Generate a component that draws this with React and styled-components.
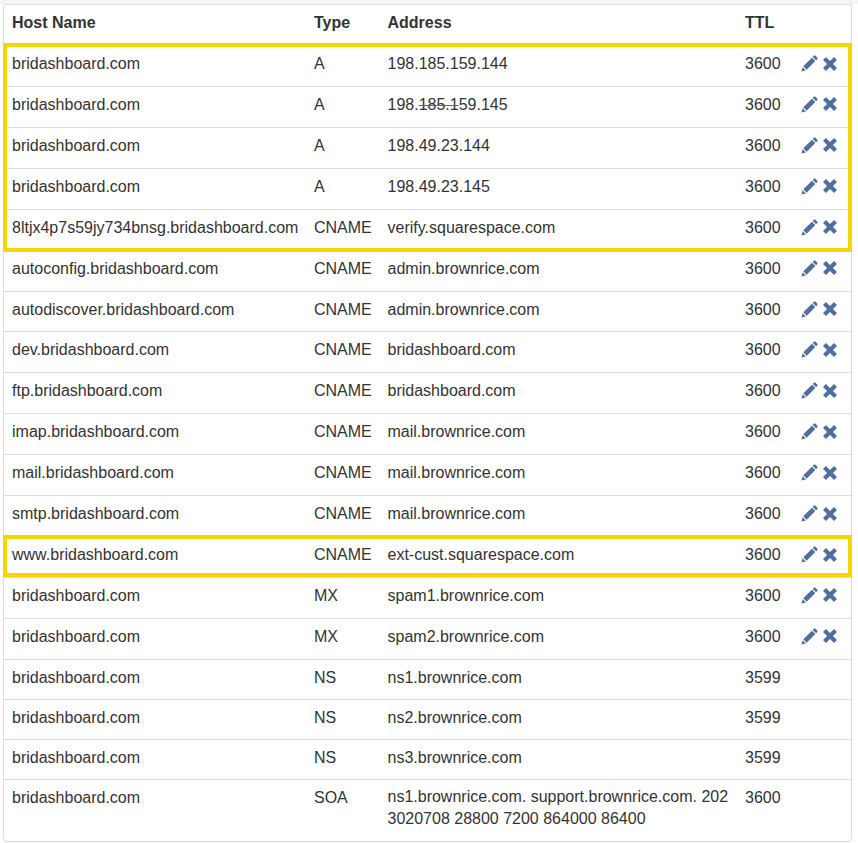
import styled, { createGlobalStyle } from "styled-components";

const GlobalStyle = createGlobalStyle`
  html, body {
    margin: 0;
    background: #fff;
    font-family: "Liberation Sans", Arial, sans-serif;
    font-size: 16px;
    color: #333;
  }
`;

const Page = styled.div`
  width: 858px;
  height: 843px;
  overflow: hidden;
  position: relative;
  background: #fff;
`;

const TopStrip = styled.div`
  height: 4px;
  background: #f5f5f5;
`;

const Panel = styled.div`
  margin: 0 6px 0 3px;
  border: 1px solid #ddd;
  border-radius: 0 0 4px 4px;
  box-shadow: 0 1px 1px rgba(0, 0, 0, 0.05);
`;

const Table = styled.table`
  width: 100%;
  table-layout: fixed;
  border-collapse: collapse;
  line-height: 23px;
`;

const Th = styled.th`
  padding: 6px 8px 11px;
  text-align: left;
  font-weight: 700;
`;

const Td = styled.td`
  padding: 6px 8px ${(p) => (p.$tall ? "10.93px" : "10px")};
  border-top: 1px solid #ddd;
  vertical-align: top;
  white-space: ${(p) => (p.$wrap ? "normal" : "nowrap")};
  word-break: ${(p) => (p.$wrap ? "break-all" : "normal")};
  line-height: ${(p) => (p.$wrap ? "22.5px" : "23px")};
`;

const Strike = styled.s`
  text-decoration-color: #666;
`;

const Actions = styled.div`
  display: flex;
  align-items: center;
  gap: 5px;
  height: 23px;
  color: #4f6f9f;
`;

const Highlight = styled.div`
  position: absolute;
  left: 3px;
  width: 849px;
  top: ${(p) => p.$top}px;
  height: ${(p) => p.$height}px;
  box-sizing: border-box;
  border: 4px solid #f0d800;
  pointer-events: none;
`;

const PencilIcon = () => (
  <svg width="17" height="17" viewBox="0 0 17 17" fill="currentColor">
    <path d="M0.5 16.5 L1.6 12.2 L4.8 15.4 Z" />
    <path d="M2.3 11.3 L10.9 2.7 L14.3 6.1 L5.7 14.7 Z" />
    <path d="M11.7 1.9 L13 0.6 Q13.6 0.2 14.2 0.6 L16.4 2.8 Q16.8 3.4 16.4 4 L15.1 5.3 Z" />
  </svg>
);

const RemoveIcon = () => (
  <svg width="14" height="14" viewBox="0 0 14 14" fill="none" stroke="currentColor" strokeWidth="4.2">
    <path d="M1.5 1.5 L12.5 12.5 M12.5 1.5 L1.5 12.5" />
  </svg>
);

const dom = "bridashboard.com";

const records = [
  [dom, "A", "198.185.159.144", 3600, true],
  [dom, "A", <>198.<Strike>185.1</Strike>59.145</>, 3600, true],
  [dom, "A", "198.49.23.144", 3600, true],
  [dom, "A", "198.49.23.145", 3600, true],
  ["8ltjx4p7s59jy734bnsg.bridashboard.com", "CNAME", "verify.squarespace.com", 3600, true],
  ["autoconfig.bridashboard.com", "CNAME", "admin.brownrice.com", 3600, true],
  ["autodiscover.bridashboard.com", "CNAME", "admin.brownrice.com", 3600, true],
  ["dev.bridashboard.com", "CNAME", dom, 3600, true],
  ["ftp.bridashboard.com", "CNAME", dom, 3600, true],
  ["imap.bridashboard.com", "CNAME", "mail.brownrice.com", 3600, true],
  ["mail.bridashboard.com", "CNAME", "mail.brownrice.com", 3600, true],
  ["smtp.bridashboard.com", "CNAME", "mail.brownrice.com", 3600, true],
  ["www.bridashboard.com", "CNAME", "ext-cust.squarespace.com", 3600, true],
  [dom, "MX", "spam1.brownrice.com", 3600, true],
  [dom, "MX", "spam2.brownrice.com", 3600, true],
  [dom, "NS", "ns1.brownrice.com", 3599, false],
  [dom, "NS", "ns2.brownrice.com", 3599, false],
  [dom, "NS", "ns3.brownrice.com", 3599, false],
  [dom, "SOA", "ns1.brownrice.com. support.brownrice.com. 2023020708 28800 7200 864000 86400", 3600, false],
];

export default function App() {
  return (
    <Page>
      <GlobalStyle />
      <TopStrip />
      <Panel>
        <Table>
          <colgroup>
            <col style={{ width: 302 }} />
            <col style={{ width: 73.5 }} />
            <col style={{ width: 357.5 }} />
            <col style={{ width: 56 }} />
            <col />
          </colgroup>
          <thead>
            <tr>
              <Th>Host Name</Th>
              <Th>Type</Th>
              <Th>Address</Th>
              <Th>TTL</Th>
              <Th />
            </tr>
          </thead>
          <tbody>
            {records.map((r, i) => (
              <tr key={i}>
                <Td $tall={r[4]}>{r[0]}</Td>
                <Td $tall={r[4]}>{r[1]}</Td>
                <Td $tall={r[4]} $wrap={r[1] === "SOA"}>{r[2]}</Td>
                <Td $tall={r[4]}>{r[3]}</Td>
                <Td $tall={r[4]}>
                  {r[4] ? (
                    <Actions>
                      <PencilIcon />
                      <RemoveIcon />
                    </Actions>
                  ) : null}
                </Td>
              </tr>
            ))}
          </tbody>
        </Table>
      </Panel>
      <Highlight $top={43} $height={209} />
      <Highlight $top={535} $height={42} />
    </Page>
  );
}
